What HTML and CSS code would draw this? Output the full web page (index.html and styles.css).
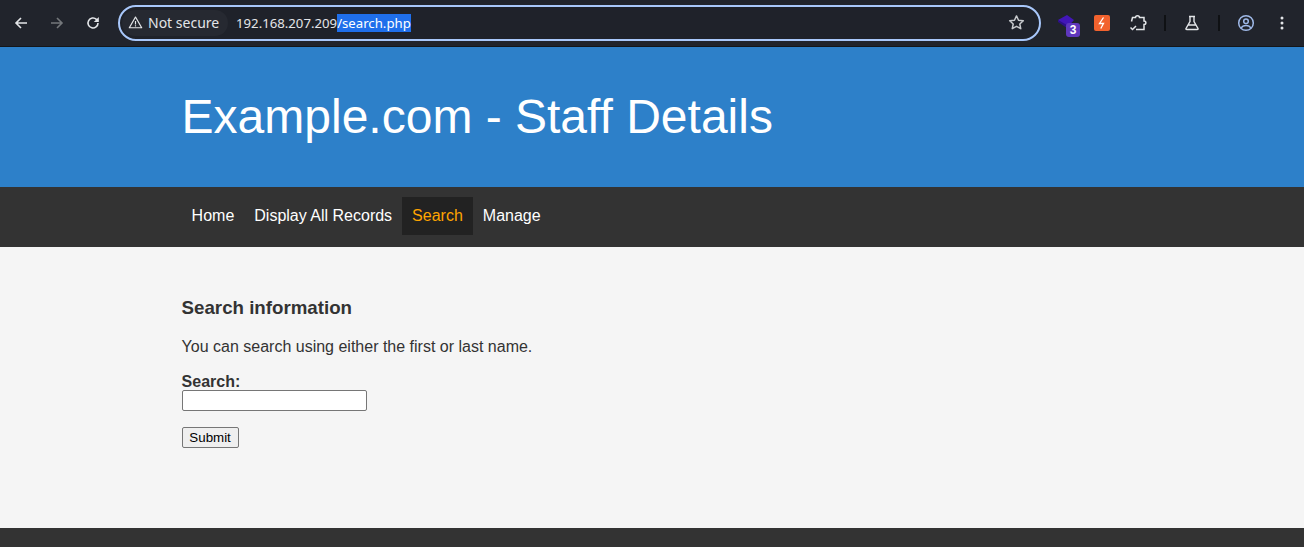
FILE: index.html
```html
<!DOCTYPE html>
<html lang="en">
<head>
<meta charset="utf-8">
<title>Example.com - Staff Details</title>
<link rel="stylesheet" href="styles.css">
</head>
<body>
<div class="chrome">
  <div class="navbtns">
    <svg class="ico" viewBox="0 0 16 16"><path d="M14 8H3M8 3L3 8l5 5" fill="none" stroke="#e3e5e8" stroke-width="1.6"/></svg>
    <svg class="ico" viewBox="0 0 16 16"><path d="M2 8h11M8 3l5 5-5 5" fill="none" stroke="#74777b" stroke-width="1.6"/></svg>
    <svg class="ico" viewBox="0 0 16 16"><path d="M13 8a5 5 0 1 1-1.600-3.700L13 6" fill="none" stroke="#e3e5e8" stroke-width="1.600"/><path d="M13.800 2v5h-5z" fill="#e3e5e8"/></svg>
  </div>
  <div class="omnibox">
    <div class="chip">
      <svg class="warn" viewBox="0 0 16 16"><path d="M8 2.200L14.600 13.600H1.400z" fill="none" stroke="#e3e5e8" stroke-width="1.300" stroke-linejoin="round"/><path d="M8 6.500v3.500M8 11v1.200" stroke="#e3e5e8" stroke-width="1.200"/></svg>
      <span>Not secure</span>
    </div>
    <div class="url"><span>192.168.207.209</span><span class="sel">/search.php</span></div>
    <svg class="star" viewBox="0 0 16 16"><path d="M8 1.800l1.900 4.100 4.500.5-3.300 3 .9 4.400L8 11.600l-4 2.200.9-4.400-3.300-3 4.500-.5z" fill="none" stroke="#c8cacd" stroke-width="1.400" stroke-linejoin="round"/></svg>
  </div>
  <div class="tools">
    <div class="ext">
      <svg class="stack" viewBox="0 0 18 14"><path d="M9 0l7 5-7 8-9-8z" fill="#4216b8"/><path d="M0 5l9 5v3L0 7z" fill="#2c1088"/></svg>
      <span class="badge">3</span>
    </div>
    <div class="bolt">
      <svg viewBox="0 0 16 16"><rect width="16" height="16" rx="2" fill="#f2622e"/><path d="M9.500 2.500L5.500 8.500h4L6.800 13.500" fill="none" stroke="#fff" stroke-width="1.300"/></svg>
    </div>
    <svg class="ico puzzle" viewBox="0 0 18 18"><path d="M2.500 7.500L3.500 3.500H6.500C6.500 1 10.500 1 10.500 3.500H15V7C17.500 7 17.500 10.500 15 10.500V15.500H7" fill="none" stroke="#e3e5e8" stroke-width="1.500"/><path d="M1.500 13.500L3.500 15.500L7 12" fill="none" stroke="#e3e5e8" stroke-width="1.500"/></svg>
    <i class="sep"></i>
    <svg class="ico flask" viewBox="0 0 16 16"><path d="M5 1.500h6M6 2v4.500L2 13.500c-.3.700.1 1 .8 1h10.400c.7 0 1.100-.3.800-1L10 6.500V2M4.500 10h7" fill="none" stroke="#e3e5e8" stroke-width="1.400"/></svg>
    <i class="sep"></i>
    <svg class="ico avatar" viewBox="0 0 18 18"><circle cx="9" cy="9" r="7.300" fill="none" stroke="#9fb9e8" stroke-width="1.500"/><circle cx="9" cy="7.300" r="2.300" fill="none" stroke="#9fb9e8" stroke-width="1.500"/><path d="M4.200 14c1-2 3-2.500 4.800-2.500s3.800.5 4.800 2.500" fill="none" stroke="#9fb9e8" stroke-width="1.500"/></svg>
    <svg class="ico dots" viewBox="0 0 16 16"><circle cx="8" cy="3" r="1.500" fill="#e3e5e8"/><circle cx="8" cy="8" r="1.500" fill="#e3e5e8"/><circle cx="8" cy="13" r="1.500" fill="#e3e5e8"/></svg>
  </div>
</div>
<header class="banner"><h1>Example.com - Staff Details</h1></header>
<nav class="menu">
  <a href="#">Home</a>
  <a href="#">Display All Records</a>
  <a href="#" class="current">Search</a>
  <a href="#">Manage</a>
</nav>
<main class="content">
  <h3>Search information</h3>
  <p>You can search using either the first or last name.</p>
  <form class="form" onsubmit="return false">
    <label for="q">Search:</label>
    <input id="q" type="text">
    <input class="submit" type="submit" value="Submit">
  </form>
</main>
<footer class="foot"></footer>
</body>
</html>
```

FILE: styles.css
```css
* { box-sizing: border-box; }
html, body { margin: 0; height: 100%; }
body {
  display: flex;
  flex-direction: column;
  height: 547px;
  overflow: hidden;
  font-family: "Liberation Sans", Arial, sans-serif;
  background: #f5f5f5;
  color: #333;
}
.chrome {
  height: 47px;
  flex: none;
  background: #21242c;
  display: flex;
  align-items: center;
  padding: 0 0 1px 13px;
  border-bottom: 1px solid #14161a;
}
.navbtns { display: flex; gap: 20px; align-items: center; width: 105px; flex: none; }
.ico { width: 16px; height: 16px; flex: none; display: block; }
.omnibox {
  width: 923px;
  height: 36px;
  flex: none;
  border: 2px solid #a8c7fa;
  border-radius: 18px;
  background: #1f222a;
  display: flex;
  align-items: center;
  padding: 0 14.5px 0 2px;
  color: #e3e5e8;
  font-family: "Noto Sans", "Open Sans", sans-serif;
  font-size: 14px;
}
.chip {
  display: flex;
  align-items: center;
  gap: 5px;
  width: 106px;
  height: 26px;
  margin-right: 8px;
  padding-left: 6px;
  flex: none;
  border-radius: 13px;
  background: #262931;
}
.warn { width: 15px; height: 15px; flex: none; }
.url { flex: 1; display: flex; font-size: 13.2px; line-height: 18px; }
.sel { background: #1f6feb; color: #fff; }
.star { width: 17px; height: 17px; flex: none; }
.tools { flex: 1; display: flex; align-items: center; padding-left: 17px; }
.ext { position: relative; width: 22px; height: 24px; flex: none; }
.stack { position: absolute; left: 0; top: 4px; width: 18px; height: 14px; }
.badge {
  position: absolute;
  left: 8px;
  top: 12px;
  width: 14px;
  height: 14px;
  border-radius: 3px;
  background: #5f37bd;
  color: #fff;
  font-size: 12px;
  font-weight: bold;
  line-height: 14px;
  text-align: center;
}
.bolt { width: 16px; height: 16px; margin-left: 14px; flex: none; }
.bolt svg { display: block; width: 16px; height: 16px; }
.puzzle { width: 18px; height: 18px; margin-left: 19px; }
.sep { width: 2px; height: 16px; background: #0f1114; margin-left: 17px; flex: none; }
.flask { margin-left: 18px; }
.flask + .sep { margin-left: 18px; }
.avatar { width: 18px; height: 18px; margin-left: 17px; }
.dots { margin-left: 19px; }
.banner {
  height: 140px;
  flex: none;
  background: #2d80c9;
  padding: 0 181.6px 2px;
  display: flex;
  align-items: center;
}
.banner h1 { margin: 0; color: #fff; font-weight: normal; font-size: 48px; line-height: 55px; }
.menu {
  height: 60px;
  flex: none;
  background: #333;
  padding: 10px 181.6px;
  display: flex;
}
.menu a {
  height: 38px;
  padding: 0 10px;
  color: #fff;
  font-size: 16px;
  line-height: 38px;
  text-decoration: none;
}
.menu a.current { background: #222; color: #ffa500; }
.content { flex: 1; padding: 50px 181.6px 0; }
.content h3 { margin: 0; font-size: 18.72px; line-height: 22px; font-weight: bold; }
.content p { margin: 19px 0 0; font-size: 16px; line-height: 18px; }
.form { margin-top: 17px; display: flex; flex-direction: column; align-items: flex-start; }
.form label { font-size: 16px; font-weight: bold; line-height: 17px; }
.form input { margin: 0; font-family: "Liberation Sans", Arial, sans-serif; font-size: 13.333px; }
#q { width: 185px; height: 21px; border: 1px solid #767676; border-radius: 2px; background: #fff; padding: 1px 2px; }
.submit { margin-top: 16px !important; height: 21px; width: 57px; border: 1px solid #767676; border-radius: 2px; background: #efefef; color: #000; padding: 1px 6px; }
.foot { height: 19px; flex: none; background: #333; }
```
